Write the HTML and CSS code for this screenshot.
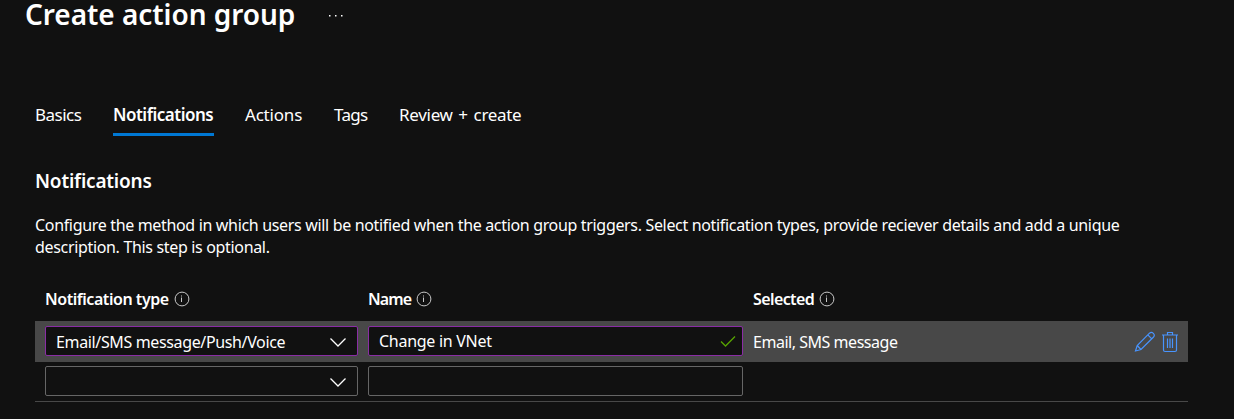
FILE: index.html
```html
<!DOCTYPE html>
<html lang="en">
<head>
<meta charset="utf-8">
<title>Create action group</title>
<link rel="stylesheet" href="styles.css">
</head>
<body>
<header class="page-header">
  <h1 class="title">Create action group</h1>
  <svg class="more" width="16" height="4" viewBox="0 0 16 4" fill="#fff"><rect x="1" y="1" width="1.5" height="1.5"/><rect x="7" y="1" width="1.5" height="1.5"/><rect x="13" y="1" width="1.5" height="1.5"/></svg>
</header>
<nav class="tabs">
  <a class="tab basics">Basics</a>
  <a class="tab active">Notifications</a>
  <a class="tab actions">Actions</a>
  <a class="tab tags">Tags</a>
  <a class="tab review">Review + create</a>
</nav>
<main class="content">
  <h2 class="section-title">Notifications</h2>
  <p class="description"><span class="line-one">Configure the method in which users will be notified when the action group triggers. Select notification types, provide reciever details and add a unique</span><br><span class="line-two">description. This step is optional.</span></p>
  <div class="table">
    <div class="row head">
      <div class="cell"><span class="label label-type">Notification type</span><svg class="info" width="16" height="16" viewBox="0 0 16 16"><circle cx="8" cy="8" r="6.9"/><path d="M7.500 6.500V11M7.500 4.500v1"/></svg></div>
      <div class="cell"><span class="label label-name">Name</span><svg class="info" width="16" height="16" viewBox="0 0 16 16"><circle cx="8" cy="8" r="6.9"/><path d="M7.500 6.500V11M7.500 4.500v1"/></svg></div>
      <div class="cell"><span class="label label-selected">Selected</span><svg class="info" width="16" height="16" viewBox="0 0 16 16"><circle cx="8" cy="8" r="6.9"/><path d="M7.500 6.500V11M7.500 4.500v1"/></svg></div>
    </div>
    <div class="row selected">
      <div class="field edited"><span class="value type-value">Email/SMS message/Push/Voice</span><svg class="chevron" width="18" height="12" viewBox="0 0 18 12"><path d="M1.500 2.500 9 10 16.500 2.500"/></svg></div>
      <div class="field edited"><span class="value name-value">Change in VNet</span><svg class="check" width="16" height="13" viewBox="0 0 16 13"><path d="M1 6.500 5.500 11 15 1.500"/></svg></div>
      <div class="summary"><span class="selected-value">Email, SMS message</span>
        <span class="commands">
          <svg width="22" height="22" viewBox="0 0 22 22"><path d="M1.500 20 3.200 14.500 15.500 2.200C18 0 22 3.500 19.300 6.300L7 18.500ZM3.200 14.500 7 18.500M13.800 3.900l4 4"/></svg>
          <svg width="18" height="22" viewBox="0 0 18 22"><path d="M1 4h16M6.500 3.500V1.500h5v2M2.500 4.500V19q0 1.500 1.500 1.500h10q1.500 0 1.500-1.500V4.500M6.500 7.500v9.500M9 7.500v9.500M11.500 7.500v9.500"/></svg>
        </span>
      </div>
    </div>
    <div class="row blank">
      <div class="field"><svg class="chevron" width="18" height="12" viewBox="0 0 18 12"><path d="M1.500 2.500 9 10 16.500 2.500"/></svg></div>
      <div class="field"></div>
    </div>
  </div>
</main>
</body>
</html>
```
FILE: styles.css
```css
* { box-sizing: border-box; }
body { margin: 0; height: 419px; overflow: hidden; background: #111; color: #fff; font-family: "Noto Sans", "Open Sans", sans-serif; font-size: 16px; }
.page-header { display: flex; height: 34px; padding-left: 25px; }
.title { margin: 0; width: 303px; font-size: 28px; line-height: 29px; font-weight: 600; letter-spacing: -0.05px; white-space: nowrap; }
.more { margin-top: 14px; }
.tabs { display: flex; gap: 31px; margin-top: 66px; padding-left: 35px; height: 36px; }
.tab { height: 36px; line-height: 30px; font-size: 17px; letter-spacing: -0.5px; white-space: nowrap; }
.basics { width: 47px; }
.active { width: 101px; font-weight: 600; border-bottom: 3px solid #0078d4; }
.actions { width: 58px; letter-spacing: -0.2px; }
.tags { width: 34px; letter-spacing: -0.7px; }
.review { letter-spacing: -0.3px; word-spacing: 1.6px; }
.content { padding-left: 35px; }
.section-title { margin: 32px 0 0; font-size: 19px; line-height: 26px; font-weight: 600; letter-spacing: -0.2px; }
.description { margin: 20px 0 0; height: 45px; font-size: 16px; line-height: 22px; letter-spacing: -0.333px; white-space: nowrap; }
.table { margin-top: 18px; width: 1153px; height: 125px; border-bottom: 1px solid #484848; }
.row { display: grid; grid-template-columns: 313px 375px 1fr; column-gap: 10px; padding: 5px 10px; height: 40px; }
.head { height: 44px; padding-top: 10px; }
.cell { display: flex; height: 24px; align-items: center; gap: 5px; }
.label { font-weight: 600; font-size: 16px; letter-spacing: -0.45px; white-space: nowrap; }
.label-name { letter-spacing: -0.9px; }
.label-selected { letter-spacing: -0.6px; }
.info { fill: none; stroke: #c8c8c8; stroke-width: 1; }
.selected { height: 41px; background: #484848; }
.blank { padding-top: 4px; }
.field { display: flex; height: 30px; padding: 0 10px; align-items: center; justify-content: space-between; background: #111; border: 1px solid #666; border-radius: 2px; }
.edited { border-color: #8a2da5; }
.value { letter-spacing: -0.28px; white-space: nowrap; }
.type-value { letter-spacing: -0.36px; padding-top: 2px; }
.selected-value { letter-spacing: -0.47px; white-space: nowrap; }
.chevron { margin-left: auto; margin-top: 1px; fill: none; stroke: #fff; stroke-width: 1.3; }
.check { fill: none; stroke: #57a300; stroke-width: 1.3; margin-right: -4px; }
.summary { display: flex; height: 32px; margin-right: -1px; align-items: center; justify-content: space-between; }
.commands { display: flex; gap: 5px; fill: none; stroke: #4894fe; stroke-width: 1.2; }
```
